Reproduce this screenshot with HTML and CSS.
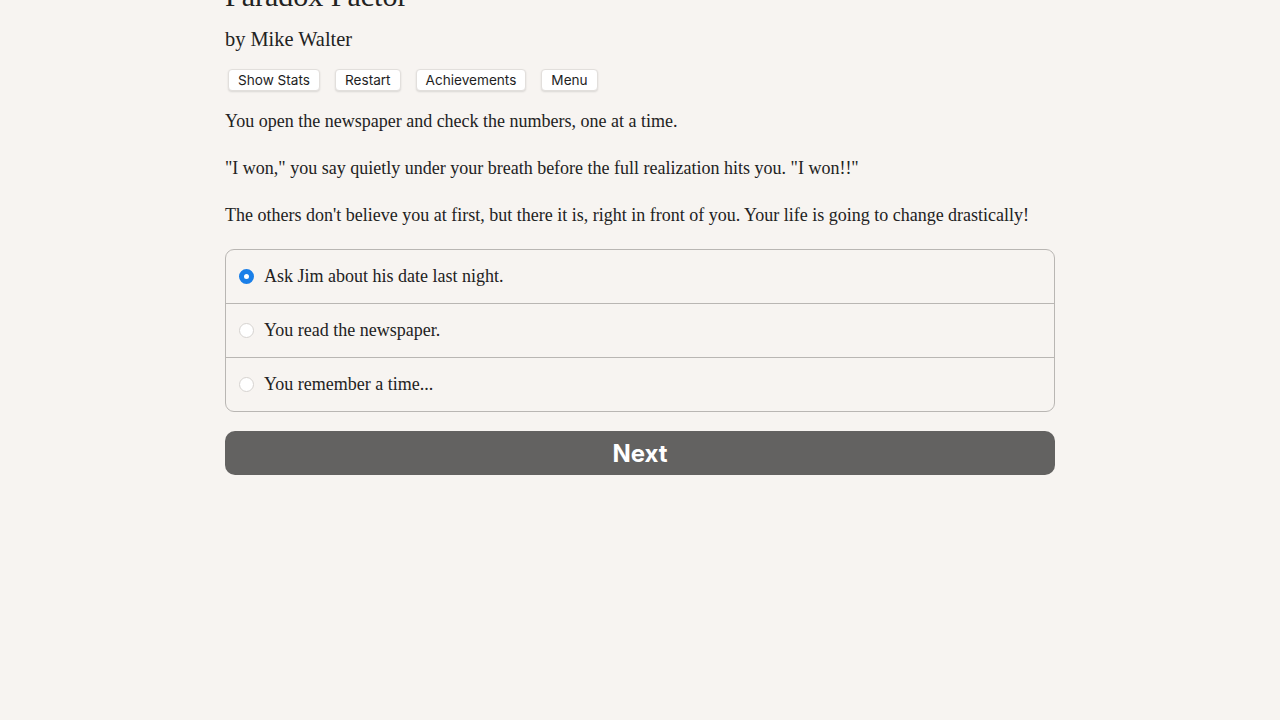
FILE: index.html
```html
<!DOCTYPE html>
<html>
<head>
<meta charset="utf-8">
<link rel="stylesheet" href="styles.css">
</head>
<body>
<div class="page">
  <h1 class="title">Paradox Factor</h1>
  <h2 class="author">by Mike Walter</h2>
  <div class="toolbar">
    <button class="tool">Show Stats</button>
    <button class="tool">Restart</button>
    <button class="tool">Achievements</button>
    <button class="tool">Menu</button>
  </div>
  <div class="text">
    <p>You open the newspaper and check the numbers, one at a time.</p>
    <p>"I won," you say quietly under your breath before the full realization hits you. "I won!!"</p>
    <p>The others don't believe you at first, but there it is, right in front of you. Your life is going to change drastically!</p>
  </div>
  <div class="choices">
    <label class="choice"><span class="radio checked"></span><span class="ctext">Ask Jim about his date last night.</span></label>
    <label class="choice"><span class="radio"></span><span class="ctext">You read the newspaper.</span></label>
    <label class="choice"><span class="radio"></span><span class="ctext">You remember a time...</span></label>
  </div>
  <button class="next">Next</button>
</div>
</body>
</html>
```
FILE: styles.css
```css
html, body {
  margin: 0;
  padding: 0;
  background: #f7f4f1;
}
body {
  font-family: "Liberation Serif", serif;
  color: #222;
}
.page {
  width: 830px;
  margin: 0 auto;
}
.title {
  font-size: 30px;
  font-weight: normal;
  margin: -22px 0 0;
  line-height: 36px;
}
.author {
  font-size: 20.4px;
  font-weight: normal;
  margin: 12px 0 0;
  line-height: 26px;
}
.toolbar {
  display: flex;
  gap: 15px;
  margin: 17px 0 0 3px;
}
.tool {
  font-family: "Inter", "Liberation Sans", sans-serif;
  font-size: 13.6px;
  color: #1e1e1e;
  background: #fff;
  border: 1px solid #e2dfdc;
  border-radius: 4px;
  box-shadow: 0 1px 2px rgba(0,0,0,0.12);
  height: 22px;
  padding: 0 9px;
  line-height: 20px;
}
.text {
  margin-top: 17px;
  font-size: 18px;
}
.text p {
  margin: 0 0 20px;
  line-height: 27px;
}
.choices {
  margin-top: 0;
  border: 1px solid #b9b6b3;
  border-radius: 9px;
  overflow: hidden;
}
.choice {
  display: flex;
  align-items: center;
  height: 53px;
  padding-left: 13px;
  font-size: 18px;
  border-top: 1px solid #b9b6b3;
}
.choice:first-child {
  border-top: none;
}
.radio {
  width: 15px;
  height: 15px;
  border-radius: 50%;
  background: #fff;
  border: 1px solid #d6d3d0;
  box-sizing: border-box;
  margin-right: 10px;
  flex: none;
}
.radio.checked {
  border: 5px solid #1a7fe8;
  background: #fff;
}
.next {
  display: block;
  width: 100%;
  height: 44px;
  margin-top: 19px;
  background: #636261;
  color: #fff;
  border: none;
  border-radius: 10px;
  font-family: "Inter", "Liberation Sans", sans-serif;
  font-weight: bold;
  font-size: 24px;
}
```
